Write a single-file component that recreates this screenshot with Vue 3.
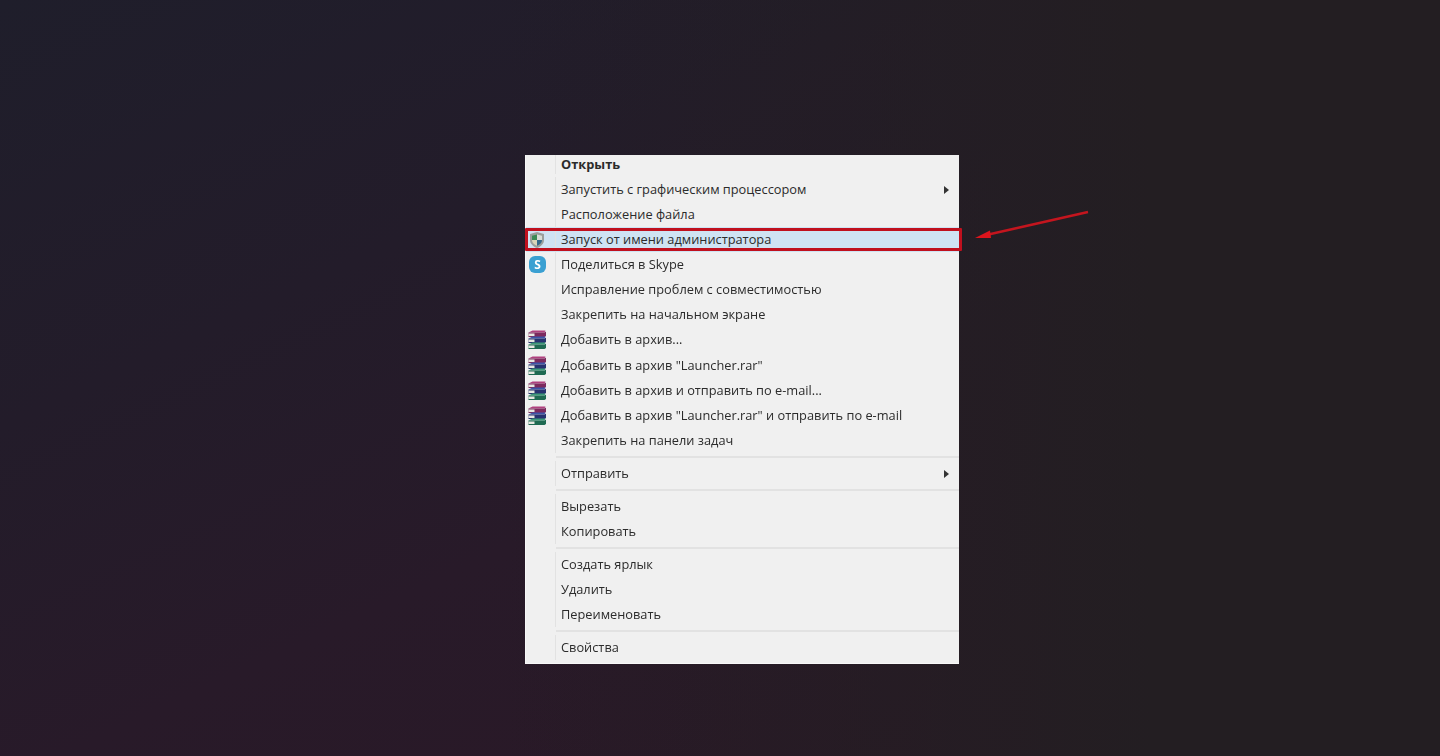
<script setup>
const groups = [
  [
    { label: 'Открыть', bold: true, first: true },
    { label: 'Запустить с графическим процессором', sub: true },
    { label: 'Расположение файла' },
    { label: 'Запуск от имени администратора', icon: 'shield', marked: true },
    { label: 'Поделиться в Skype', icon: 'skype' },
    { label: 'Исправление проблем с совместимостью' },
    { label: 'Закрепить на начальном экране' },
    { label: 'Добавить в архив...', icon: 'rar', tall: true },
    { label: 'Добавить в архив "Launcher.rar"', icon: 'rar' },
    { label: 'Добавить в архив и отправить по e-mail...', icon: 'rar' },
    { label: 'Добавить в архив "Launcher.rar" и отправить по e-mail', icon: 'rar' },
    { label: 'Закрепить на панели задач' }
  ],
  [{ label: 'Отправить', sub: true }],
  [{ label: 'Вырезать' }, { label: 'Копировать' }],
  [{ label: 'Создать ярлык' }, { label: 'Удалить' }, { label: 'Переименовать' }],
  [{ label: 'Свойства' }]
]

// три книжки архива сверху вниз
const books = [
  { y: 0, top: '#b0407f', color: '#7c2a5e' },
  { y: 6, top: '#3d55a8', color: '#27326f' },
  { y: 12, top: '#3c9a78', color: '#1f6a52' }
]
</script>

<template>
  <div class="desktop">
    <div class="menu">
      <div v-for="(group, g) in groups" :key="g" class="group">
        <div
          v-for="item in group"
          :key="item.label"
          class="row"
          :class="{ first: item.first, marked: item.marked, tall: item.tall }"
        >
          <span class="icon-cell">
            <svg v-if="item.icon === 'shield'" class="shield" width="18" height="18" viewBox="0 0 18 18">
              <path d="M9 1 16 3V9c0 3.800-3 6.500-7 8C5 15.500 2 12.800 2 9V3Z" fill="#9a9f9c" />
              <path d="M9 3.500 4 4.800V9H9Z" fill="#3c8a55" />
              <path d="M9 3.500 14 4.800V9H9Z" fill="#d8ddd6" />
              <path d="M4 9H9V14.800C6.200 13.600 4 11.700 4 9Z" fill="#d9d6b8" />
              <path d="M14 9H9V14.800C11.800 13.600 14 11.700 14 9Z" fill="#35698a" />
            </svg>
            <span v-else-if="item.icon === 'skype'" class="skype">S</span>
            <svg v-else-if="item.icon === 'rar'" width="21" height="20" viewBox="0 0 20 20">
              <g v-for="book in books" :key="book.y">
                <path :d="`M1 ${book.y + 2.500} 5 ${book.y + 0.500} H18 L17 ${book.y + 2.500}Z`" :fill="book.top" />
                <path :d="`M1 ${book.y + 2.500} H17 L18.500 ${book.y + 1.500} V${book.y + 6} L17 ${book.y + 7} H1Z`" :fill="book.color" />
                <path :d="`M1 ${book.y + 3.500} H7 V${book.y + 6} H1Z`" fill="#e8e8e2" />
              </g>
            </svg>
          </span>
          <span class="label" :class="{ bold: item.bold }">{{ item.label }}</span>
          <span v-if="item.sub" class="arrow-right"></span>
          <span v-if="item.marked" class="red-box"></span>
        </div>
      </div>
    </div>
    <svg class="pointer" width="130" height="40" viewBox="0 0 130 40">
      <path d="M128 2 24 25.500" stroke="#c4151e" stroke-width="2.500" fill="none" />
      <path d="M15 28 30 20.500 31 28Z" fill="#dc141c" />
    </svg>
  </div>
</template>

<style>
body {
  background: #231e22;
}
</style>

<style scoped>
.desktop {
  position: relative;
  box-sizing: border-box;
  width: 1440px;
  height: 756px;
  overflow: hidden;
  padding: 155px 0 0 525px;
  background:
    linear-gradient(to right, rgba(35, 30, 34, 0) 35%, #231e22 80%),
    linear-gradient(155deg, #1f1e2b 0%, #231c2a 30%, #281a29 55%, #2b1825 100%);
  font-family: "Open Sans", "Noto Sans", sans-serif;
}

.menu {
  box-sizing: border-box;
  width: 434px;
  height: 509px;
  background: #f0f0f0;
  border-left: 1px solid #f8f8f8;
  border-bottom: 1px solid #f8f8f8;
  color: #2b2b2b;
  filter: blur(0.4px);
}

.group + .group {
  margin-top: 8px;
  position: relative;
}

.group + .group::before {
  content: "";
  position: absolute;
  left: 30px;
  right: 0;
  top: -5px;
  height: 2px;
  background: #e2e2e2;
}

.row {
  position: relative;
  display: flex;
  align-items: center;
  height: 25px;
}

.row.first {
  height: 22px;
  padding-bottom: 3px;
  box-sizing: border-box;
}

.row.tall {
  height: 26px;
}

.row.marked {
  background: #cfe3f3;
}

.icon-cell {
  flex: none;
  display: flex;
  align-items: center;
  box-sizing: border-box;
  width: 30px;
  height: 100%;
  padding-left: 1px;
  border-right: 1px solid #e2e2e2;
}

.shield {
  margin-left: 1px;
}

.label {
  margin-left: 5px;
  margin-bottom: 2px;
  font-size: 12.8px;
  white-space: nowrap;
}

.bold {
  font-weight: 700;
}

.skype {
  display: flex;
  align-items: center;
  justify-content: center;
  width: 17px;
  height: 17px;
  margin-left: 2px;
  border-radius: 6px;
  background: #3aa0d2;
  color: #fff;
  font-size: 12px;
  font-weight: 700;
}

.arrow-right {
  position: absolute;
  right: 10px;
  top: 50%;
  margin-top: -4px;
  border-left: 5px solid #333;
  border-top: 4px solid transparent;
  border-bottom: 4px solid transparent;
}

.red-box {
  position: absolute;
  left: -1px;
  right: -3px;
  top: 1px;
  bottom: 1px;
  border: 3px solid #c0101e;
  border-radius: 1px;
}

.pointer {
  position: absolute;
  left: 960px;
  top: 210px;
}
</style>
